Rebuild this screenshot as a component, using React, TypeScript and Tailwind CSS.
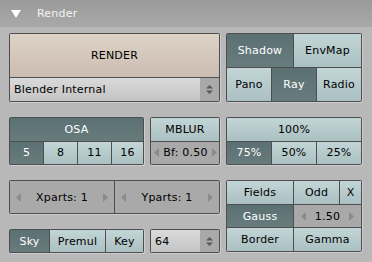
import React from 'react'

/* Couleurs des boutons façon Blender 2.4 */
const on = "bg-linear-to-b from-[#5b7072] to-[#687c7e] text-white"
const off = "bg-linear-to-b from-[#c2d5d7] to-[#abc0c2] text-black"
const txt = "text-[11px] leading-none tracking-[0.2px]"
const group = "bg-[#4e4e4e] p-px gap-px flex rounded-[2px] shadow-[1px_1px_0_#cdcdcd]"

type BtnProps = {
    label: string
    active?: boolean
    className?: string
}

const Btn: React.FC<BtnProps> = ({ label, active, className }: BtnProps) => {
    return <div className={`flex items-center justify-center ${txt} ${active ? on : off} ${className ?? "flex-1"}`}>{label}</div>
}

const Arrow = ({ dir }: { dir: 'l' | 'r' }) => (
    <svg width="5" height="9" viewBox="0 0 5 9">
        <path d={dir === 'l' ? "M5 0 L0 4.5 L5 9Z" : "M0 0 L5 4.5 L0 9Z"} fill="#8b8b8b" />
    </svg>
)

/* Champ numérique avec flèches */
const Num = ({ label, className }: { label: string, className?: string }) => (
    <div className={`flex items-center justify-between bg-[#a9a9a9] text-black ${txt} ${className ?? "flex-1 px-[4px]"}`}>
        <Arrow dir="l" />
        <span>{label}</span>
        <Arrow dir="r" />
    </div>
)

/* Menu déroulant */
const Menu = ({ label }: { label: string }) => (
    <div className={`flex flex-1 ${txt} text-black`}>
        <div className="flex flex-1 items-center pl-[4px] bg-linear-to-b from-[#dadada] to-[#c4c4c4]">{label}</div>
        <div className="w-[19px] flex items-center justify-center bg-[#a9a9a9]">
            <svg width="7" height="9" viewBox="0 0 7 9">
                <path d="M3.5 0 L7 3.5 L0 3.5Z M0 5.5 L7 5.5 L3.5 9Z" fill="#5a5a5a" />
            </svg>
        </div>
    </div>
)

export default function App() {
    return (
        <div className="w-[372px] h-[262px] bg-[#b8b8b8] overflow-hidden font-['DejaVu_Sans',sans-serif]">
            <div className="h-[27px] bg-linear-to-b from-[#9a9a9a] to-[#a9a9a9] flex items-center">
                <svg className="ml-[11px]" width="10" height="8" viewBox="0 0 10 8">
                    <path d="M0 0 L10 0 L5 8Z" fill="#ffffff" />
                </svg>
                <span className={`ml-[16px] ${txt} text-[#f4f4f4]`}>Render</span>
            </div>

            <div className="pl-[9px] pt-[6px] flex flex-col">
                {/* Ligne 1 */}
                <div className="flex gap-[6px] h-[69px]">
                    <div className={`${group} flex-col w-[211px]`}>
                        <div className={`flex items-center justify-center ${txt} h-[43px] bg-linear-to-b from-[#ded2c7] to-[#cbbcb0] text-black`}>RENDER</div>
                        <Menu label="Blender Internal" />
                    </div>
                    <div className={`${group} flex-col w-[136px]`}>
                        <div className="flex gap-px flex-1">
                            <Btn label="Shadow" active className="w-[66px]" />
                            <Btn label="EnvMap" />
                        </div>
                        <div className="flex gap-px flex-1">
                            <Btn label="Pano" />
                            <Btn label="Ray" active />
                            <Btn label="Radio" />
                        </div>
                    </div>
                </div>

                {/* Ligne 2 */}
                <div className="flex gap-[6px] h-[48px] mt-[15px]">
                    <div className={`${group} flex-col w-[135px]`}>
                        <Btn label="OSA" active />
                        <div className="flex gap-px flex-1">
                            <Btn label="5" active className="w-[33px]" />
                            <Btn label="8" className="w-[33px]" />
                            <Btn label="11" className="w-[33px]" />
                            <Btn label="16" />
                        </div>
                    </div>
                    <div className={`${group} flex-col w-[70px]`}>
                        <Btn label="MBLUR" />
                        <Num label="Bf: 0.50" className="flex-1 pl-[3px] pr-[2px]" />
                    </div>
                    <div className={`${group} flex-col w-[136px]`}>
                        <Btn label="100%" />
                        <div className="flex gap-px flex-1">
                            <Btn label="75%" active />
                            <Btn label="50%" />
                            <Btn label="25%" />
                        </div>
                    </div>
                </div>

                {/* Ligne 3 */}
                <div className="flex gap-[6px] mt-[15px]">
                    <div className="flex flex-col w-[211px]">
                        <div className={`${group} h-[34px]`}>
                            <Num label="Xparts: 1" className="flex-1 px-[6px]" />
                            <Num label="Yparts: 1" className="flex-1 px-[6px]" />
                        </div>
                        <div className="flex gap-[6px] h-[24px] mt-[15px]">
                            <div className={`${group} w-[135px]`}>
                                <Btn label="Sky" active className="w-[39px]" />
                                <Btn label="Premul" className="w-[55px]" />
                                <Btn label="Key" />
                            </div>
                            <div className={`${group} w-[70px]`}>
                                <Menu label="64" />
                            </div>
                        </div>
                    </div>
                    <div className={`${group} flex-col w-[136px] h-[72px]`}>
                        <div className="flex gap-px flex-1">
                            <Btn label="Fields" className="w-[66px]" />
                            <Btn label="Odd" className="w-[45px]" />
                            <Btn label="X" />
                        </div>
                        <div className="flex gap-px flex-1">
                            <Btn label="Gauss" active className="w-[66px]" />
                            <Num label="1.50" className="flex-1 px-[7px]" />
                        </div>
                        <div className="flex gap-px flex-1">
                            <Btn label="Border" className="w-[66px]" />
                            <Btn label="Gamma" />
                        </div>
                    </div>
                </div>
            </div>
        </div>
    )
}
